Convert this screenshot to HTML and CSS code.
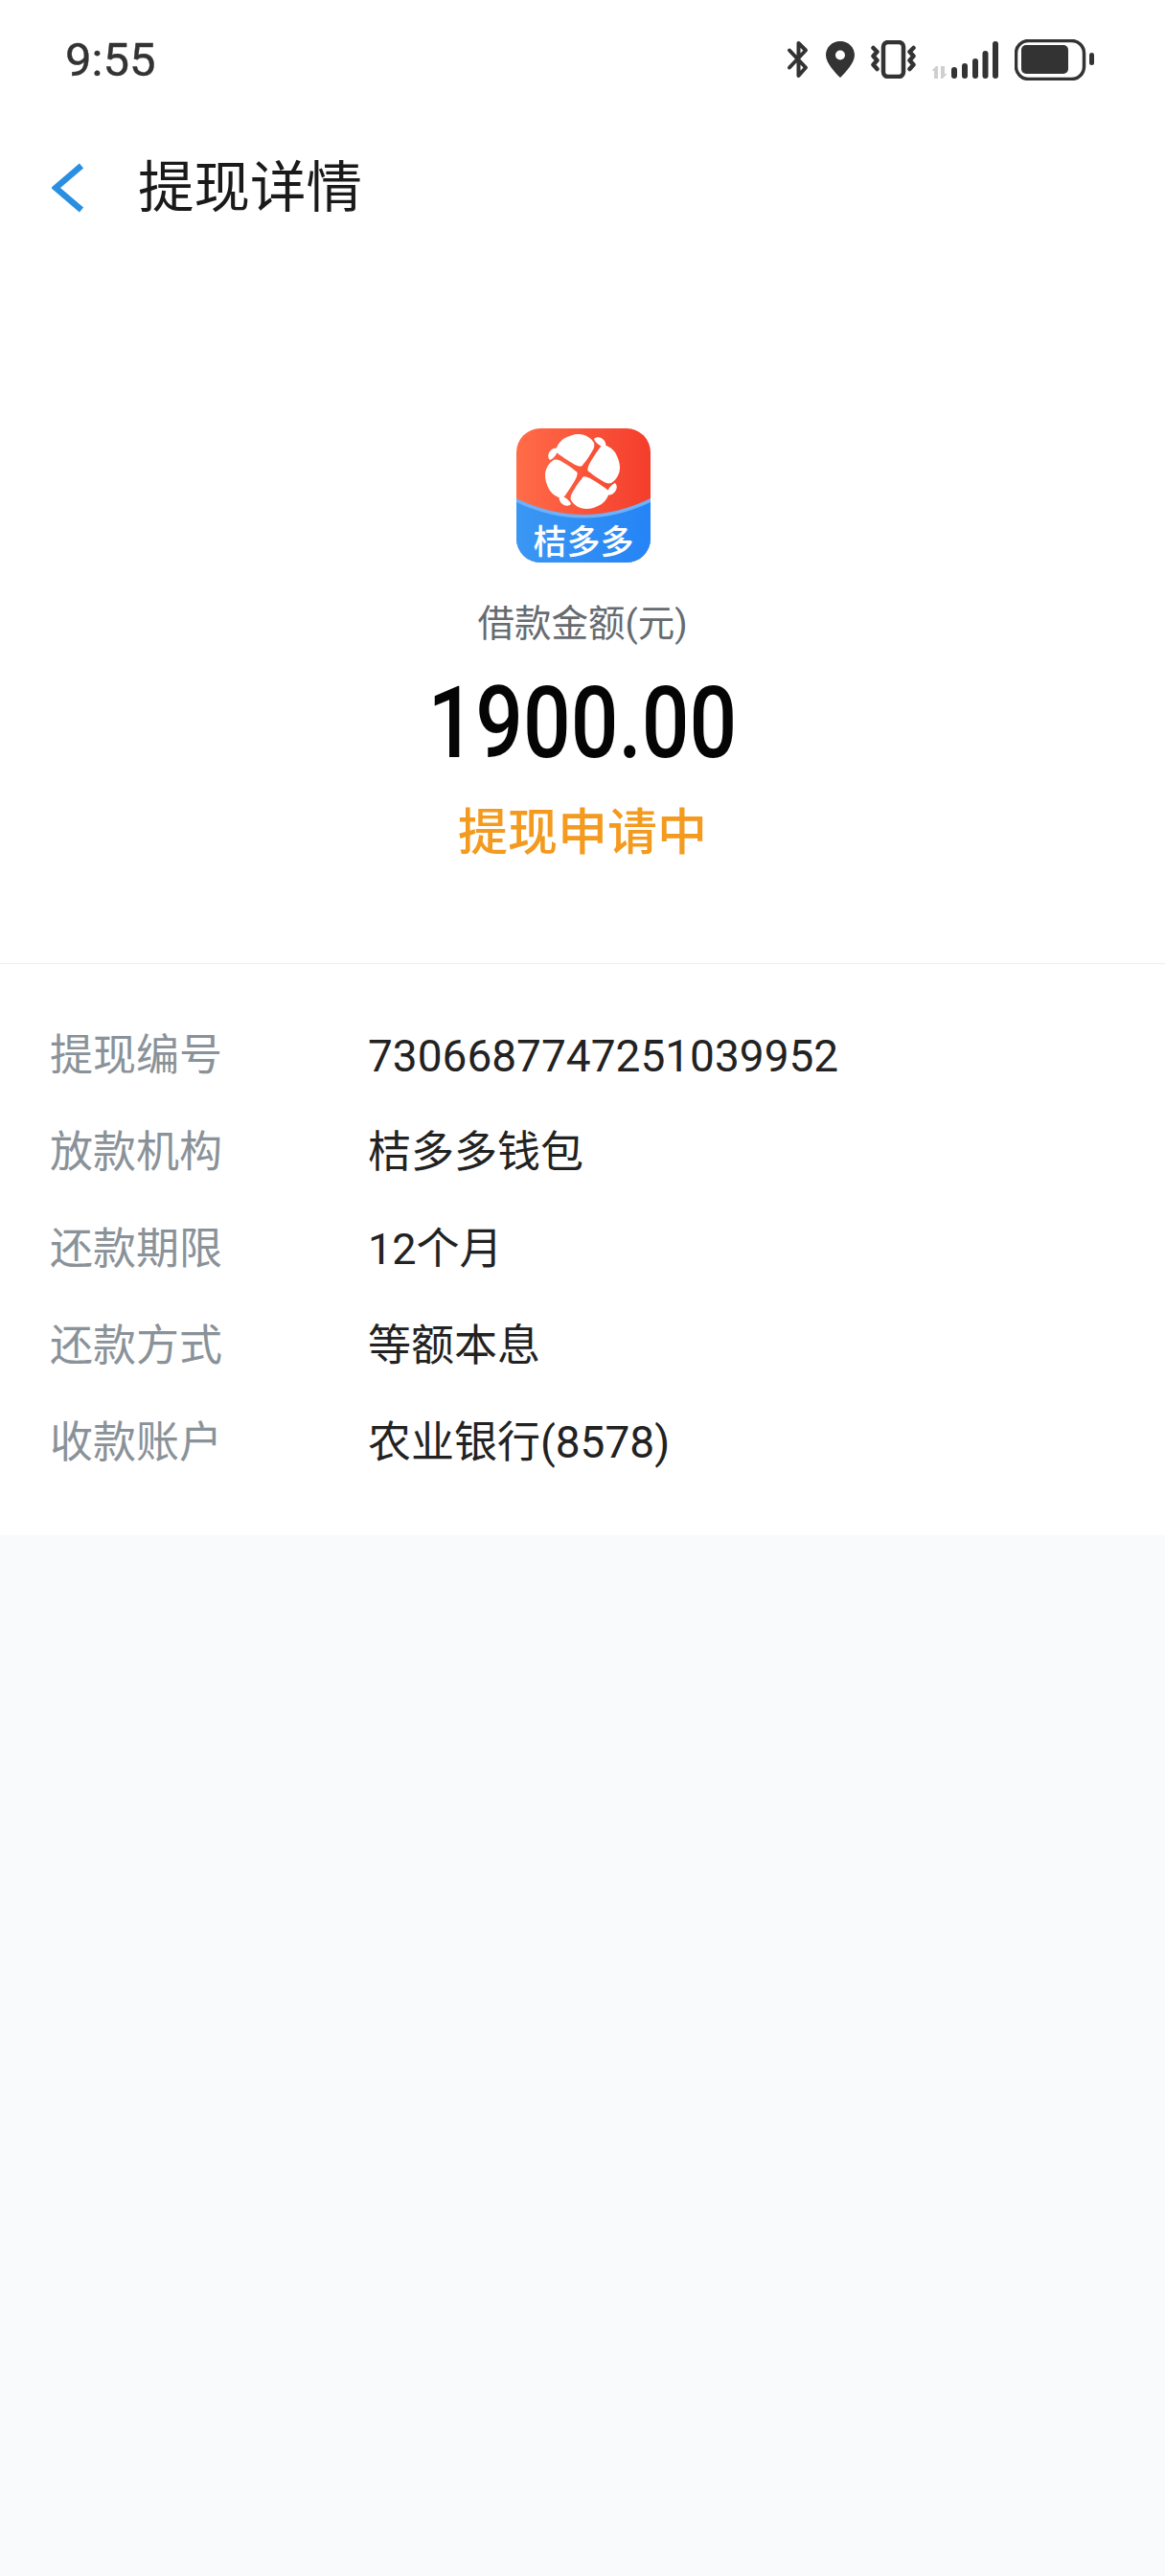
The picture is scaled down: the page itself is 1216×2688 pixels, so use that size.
FILE: index.html
```html
<!DOCTYPE html>
<html lang="zh-CN">
<head>
<meta charset="utf-8">
<title>提现详情</title>
<link rel="stylesheet" href="styles.css">
</head>
<body>
<div class="white">
  <header class="status">
    <span class="time">9:55</span>
    <div class="status-icons">
      <svg class="ic ic-bt" viewBox="0 0 24 39"><path d="M3 10 L20 28 L12.5 36.5 V2.5 L20 10 L3 28"/></svg>
      <svg class="ic ic-pin" viewBox="0 0 32 40"><path fill-rule="evenodd" d="M16 1C7 1 1 8 1 15.500C1 24 11 34 16 39C21 34 31 24 31 15.500C31 8 25 1 16 1ZM16 10.500A5 5 0 1 1 16 20.500A5 5 0 1 1 16 10.500Z"/></svg>
      <svg class="ic ic-vib" viewBox="0 0 47 40"><rect class="ln" x="13" y="2" width="21" height="36" rx="5"/><path class="ln zig" d="M2.500 8L6.500 12L2.500 16.500L6.500 21L2.500 25.500L6.500 30"/><path class="ln zig" d="M44.500 8L40.500 12L44.500 16.500L40.500 21L44.500 25.500L40.500 30"/></svg>
      <svg class="ic ic-sig" viewBox="0 0 71 40">
        <path class="dim" d="M5 27L0.500 32H3V40H7V27ZM10 27H14V35H16.500L12 40H10Z"/>
        <rect x="21" y="28" width="6" height="12" rx="3"/>
        <rect x="32" y="24" width="6" height="16" rx="3"/>
        <rect x="43" y="19" width="6" height="21" rx="3"/>
        <rect x="53.500" y="11" width="6" height="29" rx="3"/>
        <rect x="64" y="1" width="6" height="39" rx="3"/>
      </svg>
      <svg class="ic ic-bat" viewBox="0 0 84 43"><rect class="ln thin" x="1.500" y="1.500" width="71" height="40" rx="13"/><rect x="7" y="6" width="49" height="30" rx="5"/><rect x="78" y="14" width="5" height="13" rx="2.500"/></svg>
    </div>
  </header>

  <nav class="nav">
    <svg class="back" viewBox="0 0 34 52"><path d="M31 3L4 26L31 49"/></svg>
    <h1 class="title">提现详情</h1>
  </nav>

  <section class="hero">
    <svg class="logo" viewBox="0 0 140 140">
      <defs>
        <linearGradient id="logoRed" x1="0" y1="0" x2="1" y2="0"><stop offset="0" stop-color="#ff6c48"/><stop offset="1" stop-color="#f43d2c"/></linearGradient>
        <linearGradient id="logoBlue" x1="0" y1="0" x2="1" y2="0"><stop offset="0" stop-color="#3b97f3"/><stop offset="1" stop-color="#2584f6"/></linearGradient>
        <clipPath id="logoClip"><rect width="140" height="140" rx="25"/></clipPath>
        <g id="petal">
          <path d="M66 39.500C62 39 56 35 50 31C46 28 43 27 42 24C41 20 44 15 49 11C54 8 60 6 65 6C72 6 78 10 81 15C82 18 81 21 79 24C76 29 73 34 70 37C69 39 68 40 66 39.500Z"/>
          <path d="M81 11C84 8 89 9 92 13C94 16 94 20 92 24C91 20 88 18 86 17C84 15 82 14 81 11Z"/>
        </g>
      </defs>
      <g clip-path="url(#logoClip)">
        <rect width="140" height="140" fill="url(#logoRed)"/>
        <path d="M0 73Q70 107 140 73V140H0Z" fill="#6fb0f7"/>
        <path d="M0 77Q70 110 140 77V140H0Z" fill="url(#logoBlue)"/>
        <g fill="#fff">
          <use href="#petal"/>
          <use href="#petal" transform="rotate(90 69 45)"/>
          <use href="#petal" transform="rotate(180 69 45)"/>
          <use href="#petal" transform="rotate(270 69 45)"/>
        </g>
        <text class="logo-text" x="70" y="131" text-anchor="middle">桔多多</text>
      </g>
    </svg>
    <p class="amount-label">借款金额(元)</p>
    <p class="amount">1900.00</p>
    <p class="state">提现申请中</p>
  </section>

  <section class="details">
    <div class="row"><span class="key">提现编号</span><span class="val num">7306687747251039952</span></div>
    <div class="row"><span class="key">放款机构</span><span class="val">桔多多钱包</span></div>
    <div class="row"><span class="key">还款期限</span><span class="val">12个月</span></div>
    <div class="row"><span class="key">还款方式</span><span class="val">等额本息</span></div>
    <div class="row"><span class="key">收款账户</span><span class="val">农业银行<span class="num">(8578)</span></span></div>
  </section>
</div>
</body>
</html>
```
FILE: styles.css
```css
* { box-sizing: border-box; }
html, body { margin: 0; padding: 0; }
body {
  min-height: 2688px;
  background: #f9fafc;
  font-family: Roboto, "Noto Sans CJK SC", sans-serif;
  color: #222;
}
p, h1 { margin: 0; font-weight: 400; }
.white { background: #fff; }

.status {
  height: 124px;
  display: flex;
  align-items: center;
  justify-content: space-between;
  padding: 0 73px 0 68px;
}
.time { font-size: 49px; line-height: 1; color: #333; -webkit-text-stroke: 0.4px #333; }
.status-icons { display: flex; align-items: center; gap: 16px; }
.ic { display: block; height: 40px; fill: #333; }
.ic-bt { width: 24px; }
.ic-pin { width: 32px; }
.ic-vib { width: 47px; }
.ic-sig { width: 71px; }
.ic-bat { width: 84px; height: 43px; }
.ic-bt path { fill: none; stroke: #333; stroke-width: 4; stroke-linecap: round; stroke-linejoin: round; }
.ln { fill: none; stroke: #333; stroke-width: 4.500; stroke-linejoin: round; stroke-linecap: round; }
.ln.thin { stroke-width: 3.500; }
.ln.zig { stroke-width: 4.500; }
.dim { fill: #cfcfcf; }

.nav {
  height: 142px;
  display: flex;
  align-items: center;
  padding: 2px 0 0 54px;
}
.back { width: 34px; height: 52px; fill: none; stroke: #2a8fe0; stroke-width: 6.500; margin-right: 56px; }
.title { font-size: 58.500px; line-height: 1; color: #1a1a1a; }

.hero {
  display: flex;
  flex-direction: column;
  align-items: center;
  padding: 181px 0 0;
  height: 740px;
  border-bottom: 1px solid #efefef;
}
.logo { width: 140px; height: 140px; display: block; margin-left: 2px; }
.logo-text { font-size: 35px; font-weight: 500; fill: #fff; font-family: "Noto Sans CJK SC", sans-serif; }
.amount-label { margin-top: 36px; font-size: 38.500px; line-height: 56px; color: #666b70; }
.amount {
  margin-top: 26px;
  font-weight: 500;
  font-size: 103px;
  line-height: 100px;
  color: #050505;
  transform: scaleX(0.85);
}
.state { margin-top: 29px; font-size: 52px; line-height: 72px; font-weight: 500; color: #f39a1f; }

.details { padding: 46px 52px 46px; }
.row { height: 100.800px; display: flex; align-items: center; font-size: 45px; line-height: 60px; }
.key { width: 332px; color: #8a9299; }
.val { color: #222; font-size: 45px; }
.num { font-size: 46px; }
```
